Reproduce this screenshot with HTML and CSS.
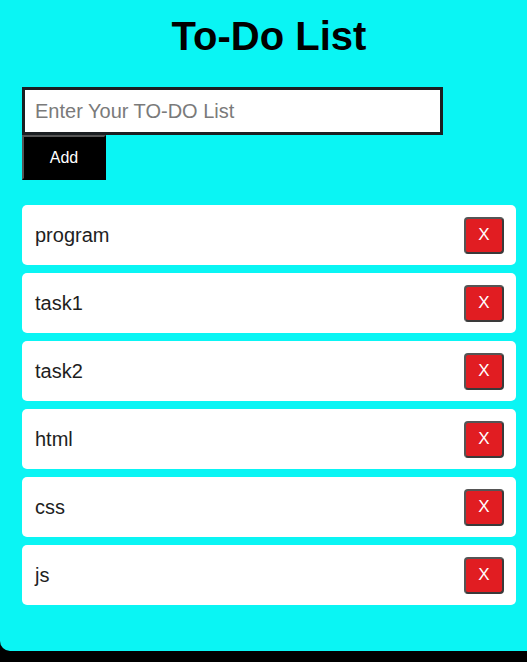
FILE: index.html
```html
<!DOCTYPE html>
<html lang="en">
<head>
<meta charset="utf-8">
<title>To-Do List</title>
<link rel="stylesheet" href="styles.css">
</head>
<body>
<div class="container">
  <h1 class="title">To-Do List</h1>
  <div class="form">
    <input class="todo-input" type="text" placeholder="Enter Your TO-DO List">
    <button class="add-btn">Add</button>
  </div>
  <ul class="list">
    <li class="item"><span class="item-text">program</span><button class="del-btn">X</button></li>
    <li class="item"><span class="item-text">task1</span><button class="del-btn">X</button></li>
    <li class="item"><span class="item-text">task2</span><button class="del-btn">X</button></li>
    <li class="item"><span class="item-text">html</span><button class="del-btn">X</button></li>
    <li class="item"><span class="item-text">css</span><button class="del-btn">X</button></li>
    <li class="item"><span class="item-text">js</span><button class="del-btn">X</button></li>
  </ul>
</div>
</body>
</html>
```

FILE: styles.css
```css
html, body {
  margin: 0;
  padding: 0;
  overflow: hidden;
  background: #000;
  font-family: "Liberation Sans", Arial, sans-serif;
}

.container {
  width: 494px;
  padding: 13px 22px 46px 22px;
  background: #0af5f4;
  border-radius: 0 0 0 10px;
}

.title {
  margin: 0;
  font-size: 40px;
  line-height: 46px;
  font-weight: bold;
  text-align: center;
  color: #000;
}

.form {
  margin-top: 28px;
  display: flex;
  flex-direction: column;
  align-items: flex-start;
}

.todo-input {
  box-sizing: border-box;
  width: 421px;
  height: 48px;
  border: 3px solid #1b1f22;
  padding: 0 10px;
  font-family: "Liberation Sans", Arial, sans-serif;
  font-size: 20px;
  color: #222;
  background: #fff;
  outline: none;
}

.todo-input::placeholder {
  color: #7a7a7a;
}

.add-btn {
  box-sizing: border-box;
  width: 84px;
  height: 45px;
  background: #000;
  color: #fff;
  font-family: "Liberation Sans", Arial, sans-serif;
  font-size: 16px;
  border: 2px solid #000;
  border-top-color: #555;
  border-left-color: #555;
  padding: 0;
}

.list {
  list-style: none;
  margin: 25px 0 0 0;
  padding: 0;
  display: flex;
  flex-direction: column;
  gap: 8px;
}

.item {
  height: 60px;
  box-sizing: border-box;
  background: #fff;
  border-radius: 5px;
  padding: 0 12px 0 13px;
  display: flex;
  align-items: center;
  justify-content: space-between;
}

.item-text {
  font-size: 20px;
  color: #1e1e1e;
}

.del-btn {
  box-sizing: border-box;
  width: 40px;
  height: 37px;
  background: #e11d22;
  color: #fff;
  font-family: "Liberation Sans", Arial, sans-serif;
  font-size: 17px;
  border: 2px solid #3a3a3a;
  border-top-color: #555;
  border-left-color: #555;
  border-radius: 4px;
  padding: 0;
}
```
